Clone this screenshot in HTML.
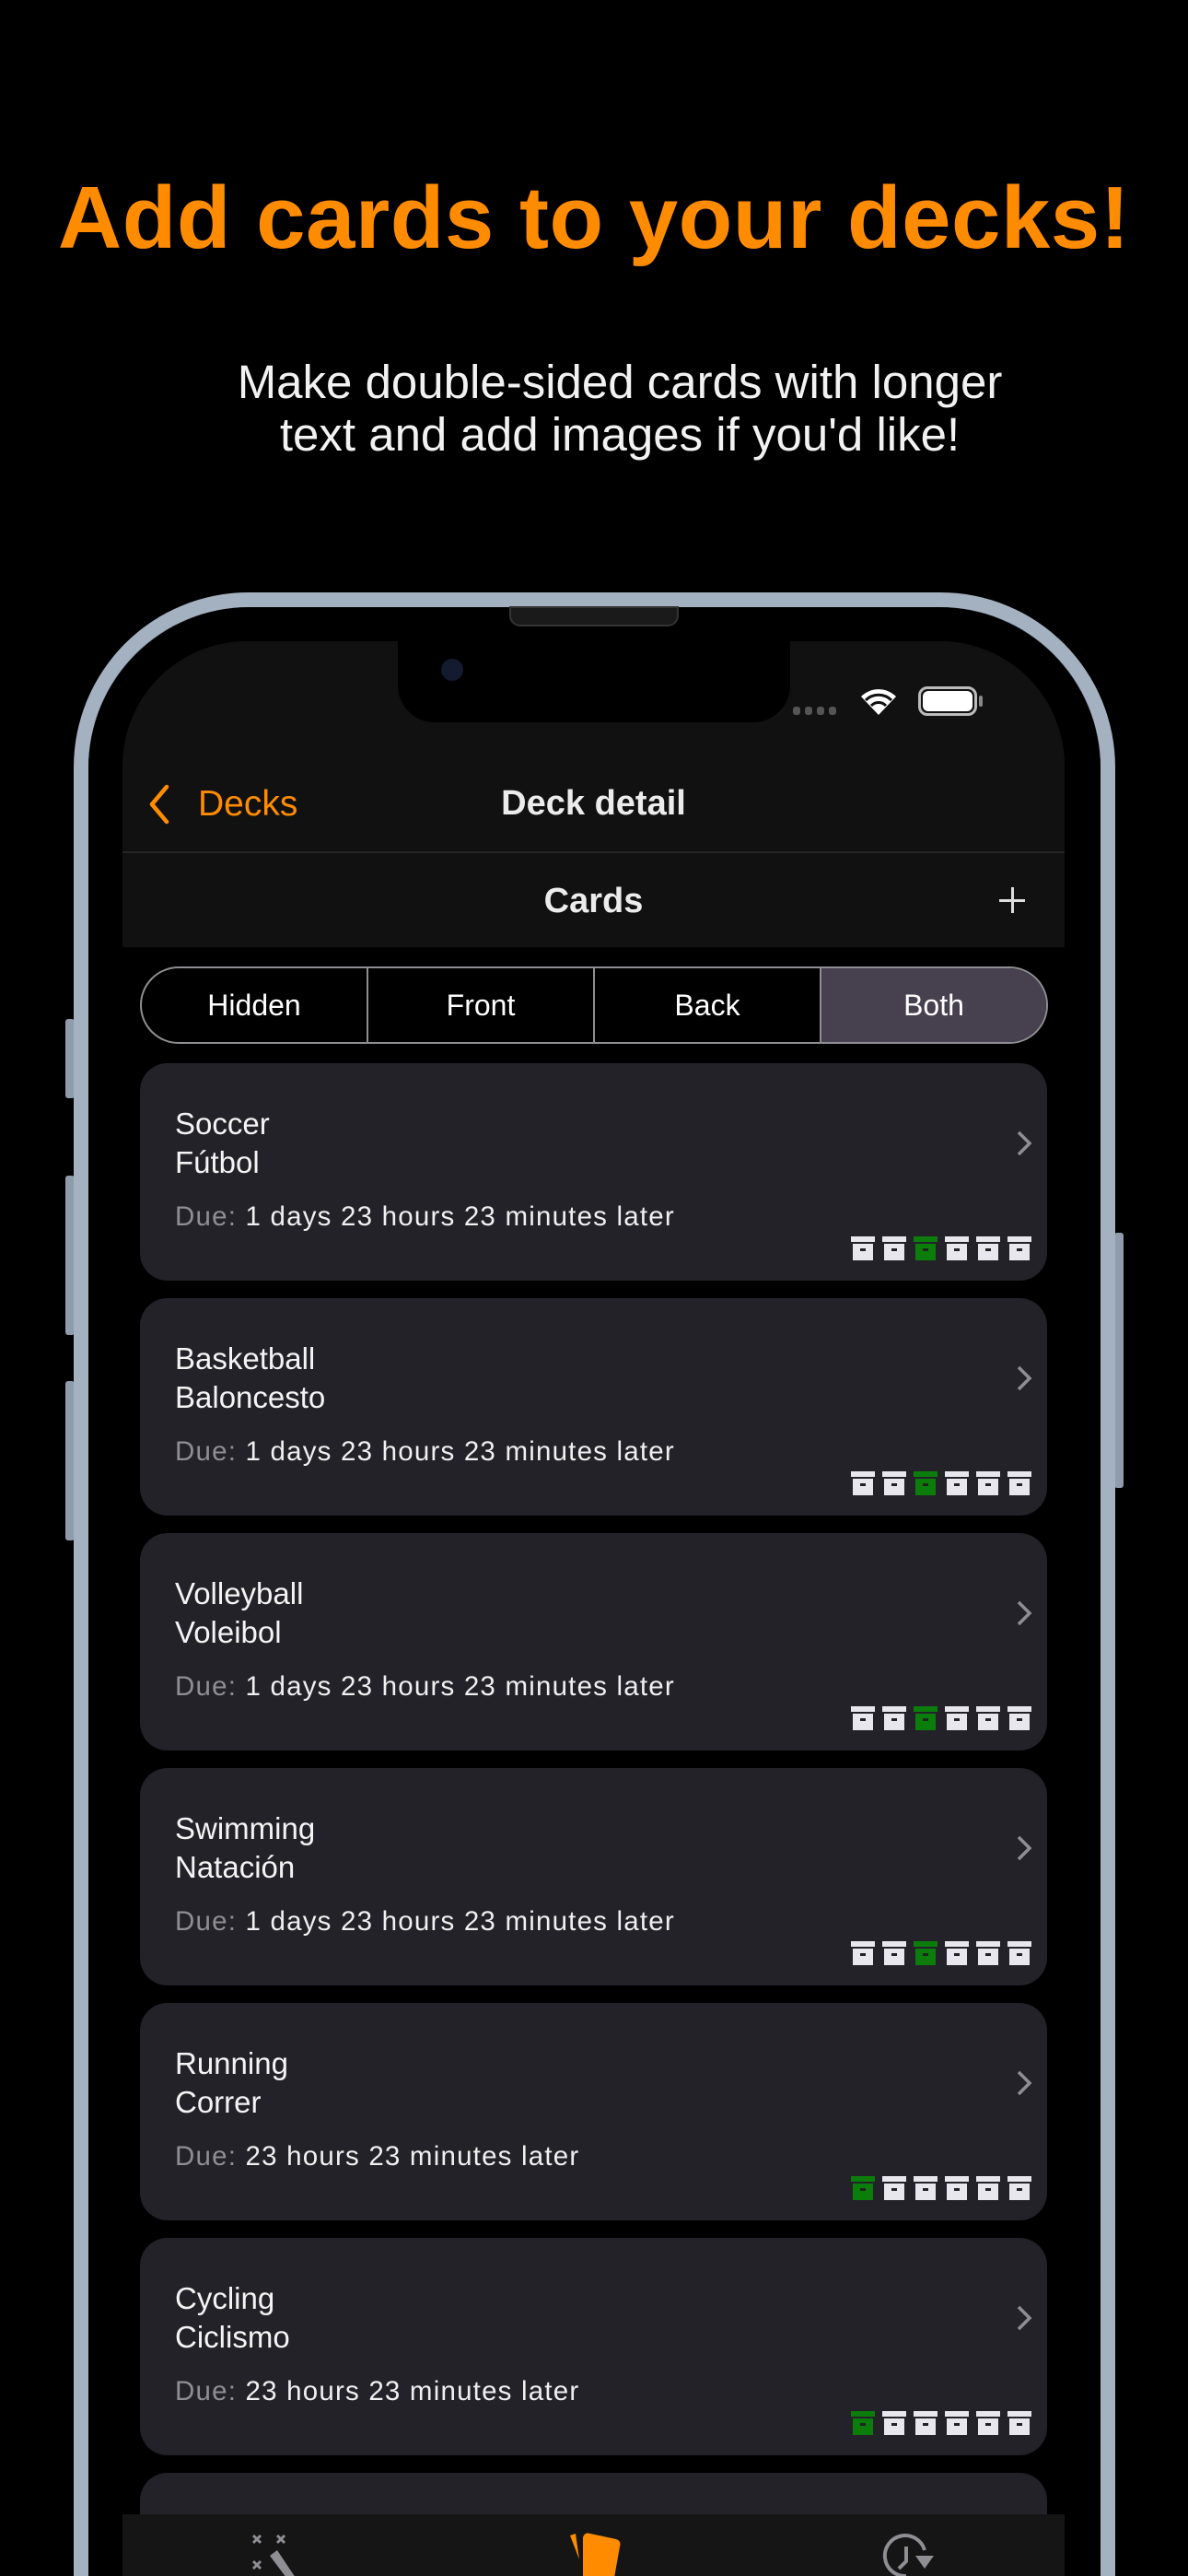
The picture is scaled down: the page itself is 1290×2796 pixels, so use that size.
<!DOCTYPE html>
<html style="width:1290px;height:2796px;overflow:hidden"><head><meta charset="utf-8">
<style>
*{margin:0;padding:0;box-sizing:border-box}
body{width:1290px;height:2796px;background:#000;overflow:hidden;font-family:"Liberation Sans",sans-serif;color:#fff}
#wrap{position:relative;width:1290px;height:2796px;overflow:hidden;background:#000}
.abs{position:absolute}
h1{position:absolute;left:0;width:1290px;top:182px;text-align:center;font-size:96px;font-weight:bold;color:#ff8c00;letter-spacing:0.5px}
.sub{position:absolute;left:28px;width:1290px;top:386px;text-align:center;font-size:51px;line-height:57px;color:#f2f2f2}
.frame{position:absolute;left:80px;top:643px;width:1131px;height:2153px;border-radius:190px 190px 0 0;border:16px solid #a4b1c0;border-bottom:none;box-shadow:inset 0 0 0 2px #56606c}
.bezel{position:absolute;left:96px;top:659px;width:1099px;height:2137px;border-radius:175px 175px 0 0;background:#000}
.screen{position:absolute;left:133px;top:696px;width:1023px;height:2100px;border-radius:135px 135px 0 0;background:#000;overflow:hidden}
.topbar{position:absolute;left:0;top:0;width:1023px;height:332px;background:#111}
.island{position:absolute;left:299px;top:0;width:426px;height:88px;background:#000;border-radius:0 0 40px 40px}
.card{position:absolute;left:19px;width:985px;height:236px;background:#232229;border-radius:30px}
.t1{position:absolute;left:38px;top:47px;font-size:33px;color:#f4f4f4}
.t2{position:absolute;left:38px;top:89px;font-size:33px;color:#f4f4f4}
.due{position:absolute;left:38px;top:150px;font-size:29.5px;letter-spacing:1.2px;color:#f0f0f0}
.due span{color:#8e8e93}
.chev{position:absolute;left:951px;top:72px}
.boxes{position:absolute;left:772px;top:188px;display:flex;gap:8px}
.bx{width:26px;height:26px;position:relative}
.bx i{position:absolute;left:0;top:0;width:26px;height:6px;background:#e9e7ee}
.bx b{position:absolute;left:2px;top:8px;width:22px;height:18px;background:#e9e7ee}
.bx b:after{content:"";position:absolute;left:8px;top:5px;width:6px;height:3px;background:#222}
.bx.g i,.bx.g b{background:#0b7d0b}
.seg{position:absolute;left:19px;top:353px;width:986px;height:84px;border:2px solid #8e8e93;border-radius:42px;overflow:hidden;display:flex;background:#000}
.seg div{flex:1;text-align:center;line-height:80px;font-size:32px;border-right:2px solid #8e8e93}
.seg div:last-child{border-right:none;background:#46404f}
</style></head><body>
<div id="wrap">
<h1>Add cards to your decks!</h1>
<div class="sub">Make double-sided cards with longer<br>text and add images if you'd like!</div>

<div class="abs" style="left:71px;top:1106px;width:10px;height:86px;background:#8f9cab;border-radius:3px"></div>
<div class="abs" style="left:71px;top:1276px;width:10px;height:173px;background:#8f9cab;border-radius:3px"></div>
<div class="abs" style="left:71px;top:1499px;width:10px;height:173px;background:#8f9cab;border-radius:3px"></div>
<div class="abs" style="left:1210px;top:1338px;width:10px;height:277px;background:#8f9cab;border-radius:3px"></div>
<div class="frame"></div>
<div class="bezel"></div>
<div class="abs" style="left:553px;top:658px;width:184px;height:22px;background:#1a1a1a;border-radius:0 0 12px 12px;border:2px solid #333"></div>

<div class="screen">
 <div class="topbar"></div>
 <div class="island"></div>
 <div class="abs" style="left:346px;top:19px;width:24px;height:24px;border-radius:50%;background:#141a30"></div>
 <div class="abs" style="left:728px;top:71px;display:flex;gap:5px"><i style="width:8px;height:9px;border-radius:3px;background:#555"></i><i style="width:8px;height:9px;border-radius:3px;background:#555"></i><i style="width:8px;height:9px;border-radius:3px;background:#555"></i><i style="width:8px;height:9px;border-radius:3px;background:#555"></i></div>
 <svg class="abs" style="left:800px;top:48px" width="42" height="34" viewBox="0 0 42 34"><path d="M21 32 L2 12 A27 27 0 0 1 40 12 Z" fill="#fff"/><path d="M7 16 A20 20 0 0 1 35 16" stroke="#111" stroke-width="3" fill="none"/><path d="M13 22 A11 11 0 0 1 29 22" stroke="#111" stroke-width="3" fill="none"/></svg>
 <div class="abs" style="left:864px;top:49px;width:64px;height:32px;border:3px solid #bbb;border-radius:10px;padding:2px"><div style="width:100%;height:100%;background:#fff;border-radius:6px"></div></div>
 <div class="abs" style="left:930px;top:59px;width:4px;height:12px;background:#888;border-radius:2px"></div>

 <svg class="abs" style="left:28px;top:155px" width="24" height="44" viewBox="0 0 24 44"><path d="M20 3 L4 22 L20 41" stroke="#ff8c00" stroke-width="4.5" fill="none" stroke-linecap="round" stroke-linejoin="round"/></svg>
 <div class="abs" style="left:82px;top:155px;font-size:39px;color:#ff8c00">Decks</div>
 <div class="abs" style="left:0;width:1023px;top:155px;text-align:center;font-size:38px;font-weight:bold;color:#ececec">Deck detail</div>
 <div class="abs" style="left:0;top:228px;width:1023px;height:2px;background:#262626"></div>
 <div class="abs" style="left:0;width:1023px;top:261px;text-align:center;font-size:38px;font-weight:bold;color:#ececec">Cards</div>
 <div class="abs" style="left:952px;top:280px;width:28px;height:3px;background:#ddd"></div>
 <div class="abs" style="left:965px;top:267px;width:3px;height:28px;background:#ddd"></div>

 <div class="seg"><div>Hidden</div><div>Front</div><div>Back</div><div>Both</div></div>

 <div class="card" style="top:458px"><div class="t1">Soccer</div><div class="t2">Fútbol</div><div class="due"><span>Due:</span> 1 days 23 hours 23 minutes later</div><svg class="chev" width="18" height="30"><path d="M3 3 L15 15 L3 27" stroke="#8e8e93" stroke-width="3.5" fill="none"/></svg><div class="boxes"><div class="bx"><i></i><b></b></div><div class="bx"><i></i><b></b></div><div class="bx g"><i></i><b></b></div><div class="bx"><i></i><b></b></div><div class="bx"><i></i><b></b></div><div class="bx"><i></i><b></b></div></div></div>
 <div class="card" style="top:713px"><div class="t1">Basketball</div><div class="t2">Baloncesto</div><div class="due"><span>Due:</span> 1 days 23 hours 23 minutes later</div><svg class="chev" width="18" height="30"><path d="M3 3 L15 15 L3 27" stroke="#8e8e93" stroke-width="3.5" fill="none"/></svg><div class="boxes"><div class="bx"><i></i><b></b></div><div class="bx"><i></i><b></b></div><div class="bx g"><i></i><b></b></div><div class="bx"><i></i><b></b></div><div class="bx"><i></i><b></b></div><div class="bx"><i></i><b></b></div></div></div>
 <div class="card" style="top:968px"><div class="t1">Volleyball</div><div class="t2">Voleibol</div><div class="due"><span>Due:</span> 1 days 23 hours 23 minutes later</div><svg class="chev" width="18" height="30"><path d="M3 3 L15 15 L3 27" stroke="#8e8e93" stroke-width="3.5" fill="none"/></svg><div class="boxes"><div class="bx"><i></i><b></b></div><div class="bx"><i></i><b></b></div><div class="bx g"><i></i><b></b></div><div class="bx"><i></i><b></b></div><div class="bx"><i></i><b></b></div><div class="bx"><i></i><b></b></div></div></div>
 <div class="card" style="top:1223px"><div class="t1">Swimming</div><div class="t2">Natación</div><div class="due"><span>Due:</span> 1 days 23 hours 23 minutes later</div><svg class="chev" width="18" height="30"><path d="M3 3 L15 15 L3 27" stroke="#8e8e93" stroke-width="3.5" fill="none"/></svg><div class="boxes"><div class="bx"><i></i><b></b></div><div class="bx"><i></i><b></b></div><div class="bx g"><i></i><b></b></div><div class="bx"><i></i><b></b></div><div class="bx"><i></i><b></b></div><div class="bx"><i></i><b></b></div></div></div>
 <div class="card" style="top:1478px"><div class="t1">Running</div><div class="t2">Correr</div><div class="due"><span>Due:</span> 23 hours 23 minutes later</div><svg class="chev" width="18" height="30"><path d="M3 3 L15 15 L3 27" stroke="#8e8e93" stroke-width="3.5" fill="none"/></svg><div class="boxes"><div class="bx g"><i></i><b></b></div><div class="bx"><i></i><b></b></div><div class="bx"><i></i><b></b></div><div class="bx"><i></i><b></b></div><div class="bx"><i></i><b></b></div><div class="bx"><i></i><b></b></div></div></div>
 <div class="card" style="top:1733px"><div class="t1">Cycling</div><div class="t2">Ciclismo</div><div class="due"><span>Due:</span> 23 hours 23 minutes later</div><svg class="chev" width="18" height="30"><path d="M3 3 L15 15 L3 27" stroke="#8e8e93" stroke-width="3.5" fill="none"/></svg><div class="boxes"><div class="bx g"><i></i><b></b></div><div class="bx"><i></i><b></b></div><div class="bx"><i></i><b></b></div><div class="bx"><i></i><b></b></div><div class="bx"><i></i><b></b></div><div class="bx"><i></i><b></b></div></div></div>
 <div class="card" style="top:1988px"></div>

 <div class="abs" style="left:0;top:2033px;width:1023px;height:67px;background:#151515"></div>
 <svg class="abs" style="left:138px;top:2052px" width="60" height="48" viewBox="0 0 60 48"><g stroke="#8e8e93" stroke-width="3"><path d="M4 4 l8 8 M12 4 l-8 8 M30 4 l8 8 M38 4 l-8 8 M4 32 l8 8 M12 32 l-8 8"/></g><path d="M22 26 L30 20 L50 50 L40 50 Z" fill="#8e8e93"/></svg>
 <svg class="abs" style="left:482px;top:2052px" width="60" height="48" viewBox="0 0 60 48"><path d="M4 4 L10 2 L14 30 Z" fill="#ff8c00"/><path d="M18 6 Q20 0 26 2 L54 8 Q60 10 58 16 L52 50 L18 50 Z" fill="#ff8c00"/></svg>
 <svg class="abs" style="left:825px;top:2052px" width="60" height="48" viewBox="0 0 60 48"><path d="M46 20 A22 22 0 1 0 26 48" stroke="#8e8e93" stroke-width="4" fill="none"/><path d="M26 16 V32 L18 40" stroke="#8e8e93" stroke-width="4" fill="none"/><path d="M36 26 H56 L46 40 Z" fill="#8e8e93"/></svg>
</div>
</div>
</body></html>
